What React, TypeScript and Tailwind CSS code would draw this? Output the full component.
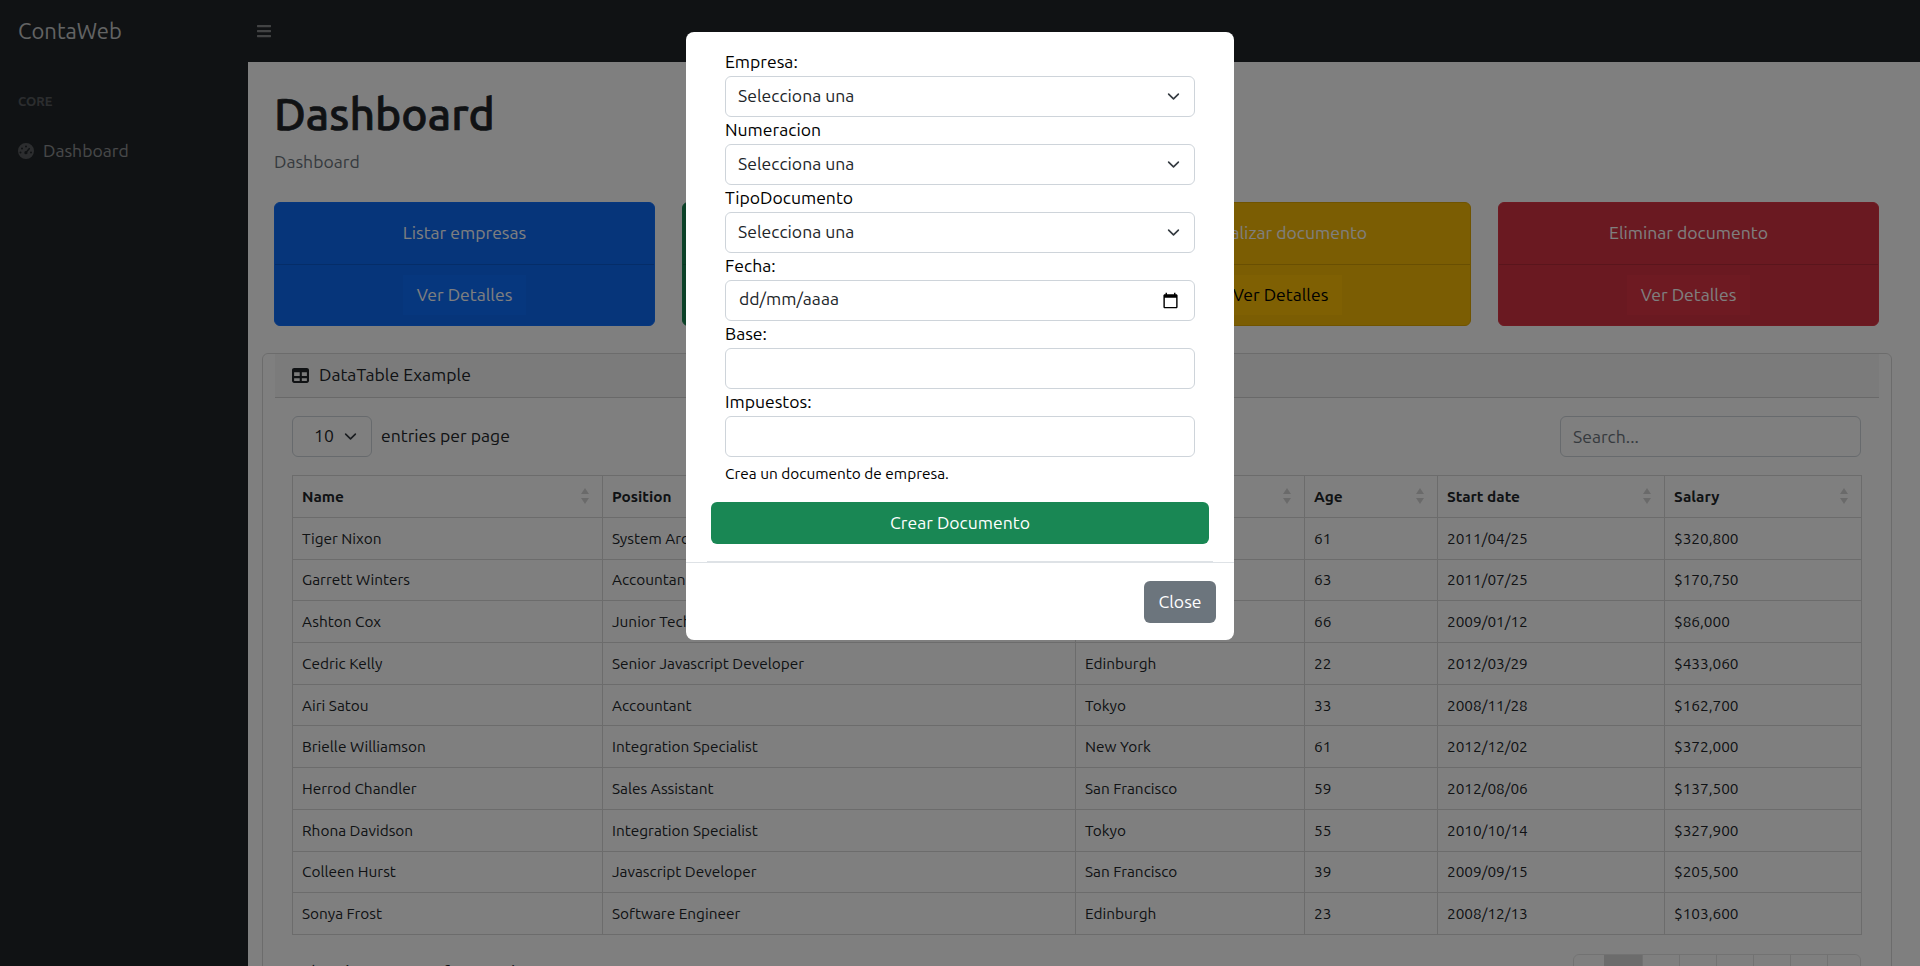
import React from 'react';

const employees = [
  ['Tiger Nixon', 'System Architect', 'Edinburgh', '61', '2011/04/25', '$320,800'],
  ['Garrett Winters', 'Accountant', 'Tokyo', '63', '2011/07/25', '$170,750'],
  ['Ashton Cox', 'Junior Technical Author', 'San Francisco', '66', '2009/01/12', '$86,000'],
  ['Cedric Kelly', 'Senior Javascript Developer', 'Edinburgh', '22', '2012/03/29', '$433,060'],
  ['Airi Satou', 'Accountant', 'Tokyo', '33', '2008/11/28', '$162,700'],
  ['Brielle Williamson', 'Integration Specialist', 'New York', '61', '2012/12/02', '$372,000'],
  ['Herrod Chandler', 'Sales Assistant', 'San Francisco', '59', '2012/08/06', '$137,500'],
  ['Rhona Davidson', 'Integration Specialist', 'Tokyo', '55', '2010/10/14', '$327,900'],
  ['Colleen Hurst', 'Javascript Developer', 'San Francisco', '39', '2009/09/15', '$205,500'],
  ['Sonya Frost', 'Software Engineer', 'Edinburgh', '23', '2008/12/13', '$103,600'],
];

const columns = [
  { label: 'Name', width: 'w-[310px]' },
  { label: 'Position', width: 'w-[473px]' },
  { label: 'Office', width: 'w-[229px]' },
  { label: 'Age', width: 'w-[133px]' },
  { label: 'Start date', width: 'w-[227px]' },
  { label: 'Salary', width: 'w-[197px]' },
];

const Chevron = ({ className }: { className?: string }) => (
  <svg viewBox="0 0 16 16" className={className} fill="none" stroke="#343a40" strokeWidth="2" strokeLinecap="round" strokeLinejoin="round">
    <path d="m2 5 6 6 6-6" />
  </svg>
);

const SortArrows = () => (
  <svg viewBox="0 0 8 16" className="w-2 h-4 shrink-0 mr-[3px]" fill="#000" fillOpacity="0.17">
    <path d="M4 0 8 6H0z" />
    <path d="M0 10h8l-4 6z" />
  </svg>
);

const StatCard = ({ title, color, border, btn, btnText }: { title: string; color: string; border: string; btn: string; btnText: string }) => (
  <div className={`flex flex-col h-[124px] rounded-[6px] border overflow-hidden ${color} ${border}`}>
    <div className="flex-1 flex items-center justify-center bg-black/[0.03] text-white">{title}</div>
    <div className="h-[61px] border-t border-black/15 bg-black/[0.03] flex items-center justify-center">
      <span className={`h-10 px-[14px] flex items-center justify-center ${btn} ${btnText}`}>Ver Detalles</span>
    </div>
  </div>
);

const SelectField = ({ label }: { label: string }) => (
  <div>
    <label className="block h-[27px] leading-[25px] text-black">{label}</label>
    <div className="relative">
      <select className="block w-full h-[41px] appearance-none rounded-[6px] border border-[#ced4da] bg-white pl-3 pr-9 pb-[1px] text-[#212529]">
        <option>Selecciona una</option>
      </select>
      <Chevron className="absolute right-[15px] top-[14px] w-[13px] h-[13px] pointer-events-none" />
    </div>
  </div>
);

const InputField = ({ label }: { label: string }) => (
  <div>
    <label className="block h-[27px] leading-[25px] text-black">{label}</label>
    <input type="text" className="block w-full h-[41px] rounded-[6px] border border-[#ced4da] bg-white px-3" />
  </div>
);

const App: React.FC = () => {
  return (
    <div className="font-['Ubuntu','Noto_Sans',sans-serif] h-[966px] overflow-hidden bg-white text-[#212529] text-[17.6px] relative">
      <header className="h-[62px] bg-[#212529] flex items-center">
        <div className="w-[248px] pl-[18px] pb-[2px] text-[22px] text-white/75">ContaWeb</div>
        <svg viewBox="0 0 448 512" className="w-[14px] h-4 ml-[9px]" fill="#ffffff" fillOpacity="0.45">
          <path d="M16 132h416c8.837 0 16-7.163 16-16V76c0-8.837-7.163-16-16-16H16C7.163 60 0 67.163 0 76v40c0 8.837 7.163 16 16 16zm0 160h416c8.837 0 16-7.163 16-16v-40c0-8.837-7.163-16-16-16H16c-8.837 0-16 7.163-16 16v40c0 8.837 7.163 16 16 16zm0 160h416c8.837 0 16-7.163 16-16v-40c0-8.837-7.163-16-16-16H16c-8.837 0-16 7.163-16 16v40c0 8.837 7.163 16 16 16z" />
        </svg>
      </header>

      <div className="flex">
        <aside className="w-[248px] h-[904px] shrink-0 bg-[#212529] pl-[18px]">
          <div className="mt-[30px] text-[13px] font-bold leading-[18px] text-white/25">CORE</div>
          <div className="mt-[29px] flex items-center gap-[9px] text-white/50">
            <svg viewBox="0 0 16 16" className="w-4 h-4 text-white/25" fill="currentColor">
              <path d="M8 0a8 8 0 1 0 0 16A8 8 0 0 0 8 0zM8 2.5a1 1 0 1 1 0 2 1 1 0 0 1 0-2zM4 4.600a1 1 0 1 1 0 2 1 1 0 0 1 0-2zM2.500 8.500a1 1 0 1 1 0 2 1 1 0 0 1 0-2zm9-3.600a.7.7 0 0 1 .5 1L9.400 9a1.600 1.600 0 1 1-1.100-.9l2.500-3a.7.7 0 0 1 .7-.2zM13 8.500a1 1 0 1 1 0 2 1 1 0 0 1 0-2z" />
            </svg>
            <span className="leading-6">Dashboard</span>
          </div>
        </aside>

        <main className="flex-1 min-w-0 pl-[14px] pr-[28px]">
          <div className="px-3">
            <h1 className="mt-7 text-[44.5px] leading-[48px] font-medium [-webkit-text-stroke:0.7px_#212529]">Dashboard</h1>
            <p className="mt-3 leading-6 text-[#6c757d]">Dashboard</p>
            <div className="mt-7 grid grid-cols-4 gap-[27px] pr-[1px]">
              <StatCard title="Listar empresas" color="bg-[#0d6efd]" border="border-[#0d6efd]" btn="bg-[#0d6efd]" btnText="text-white" />
              <StatCard title="Crear documento" color="bg-[#198754]" border="border-[#198754]" btn="bg-[#198754]" btnText="text-white" />
              <StatCard title="Actualizar documento" color="bg-[#ffc107]" border="border-[#e0a800]" btn="bg-[#ffc107]" btnText="text-black" />
              <StatCard title="Eliminar documento" color="bg-[#dc3545]" border="border-[#dc3545]" btn="bg-[#dc3545]" btnText="text-white" />
            </div>
          </div>

          <section className="mt-[27px] border border-black/15 rounded-[6px] px-3">
            <div className="h-[44px] bg-black/[0.03] border-b border-black/15 pl-[17px] pb-[1px] flex items-center gap-[10px]">
              <svg viewBox="0 0 512 512" className="w-[17px] h-[17px] text-[#212529]" fill="currentColor">
                <path d="M64 32C28.700 32 0 60.700 0 96v320c0 35.300 28.700 64 64 64h384c35.300 0 64-28.700 64-64V96c0-35.300-28.700-64-64-64H64zm0 128h168v112H64V160zm0 176h168v88H72c-4.400 0-8-3.600-8-8v-80zm232 88v-88h152v80c0 4.400-3.600 8-8 8H296zm152-152H296V160h152v112z" />
              </svg>
              <span>DataTable Example</span>
            </div>
            <div className="pl-[17px] pr-[18px] pt-[18px]">
              <div className="flex items-center justify-between">
                <div className="flex items-center gap-[9px]">
                  <div className="w-20 h-[41px] rounded-[6px] border border-[#ced4da] flex items-center pl-[21px] gap-[10px]">
                    <span>10</span>
                    <Chevron className="w-[13px] h-[13px]" />
                  </div>
                  <span>entries per page</span>
                </div>
                <input placeholder="Search..." className="w-[301px] h-[41px] rounded-[6px] border border-[#ced4da] px-3 placeholder:text-[#6c757d]" />
              </div>

              <table className="mt-[18px] w-[1569px] table-fixed border-collapse text-[15.4px] text-[#212529]">
                <thead>
                  <tr className="h-[42px]">
                    {columns.map(col => (
                      <th key={col.label} className={`${col.width} border border-[#d9d9d9] pl-[9px] pr-[10px] text-left font-bold`}>
                        <div className="flex items-center justify-between">
                          {col.label}
                          <SortArrows />
                        </div>
                      </th>
                    ))}
                  </tr>
                </thead>
                <tbody>
                  {employees.map(row => (
                    <tr key={row[0]} className="h-[41.7px]">
                      {row.map((cell, i) => (
                        <td key={i} className="border border-[#d9d9d9] pl-[9px] pr-[10px] truncate">
                          {cell}
                        </td>
                      ))}
                    </tr>
                  ))}
                </tbody>
              </table>

              <div className="mt-[19px] flex items-start justify-between">
                <div className="pl-[10px] pt-[5px]">Showing 1 to 10 of 57 entries</div>
                <div className="flex h-[44px] border border-black/10 rounded-[6px] overflow-hidden text-center">
                  <div className="w-[30px] pt-[14px]">‹</div>
                  <div className="w-[38px] pt-[14px] bg-black/15">1</div>
                  {['2', '3', '4', '5', '6'].map(p => (
                    <div key={p} className="w-[37px] pt-[14px] border-l border-black/10">{p}</div>
                  ))}
                  <div className="w-[33px] pt-[14px] border-l border-black/10">›</div>
                </div>
              </div>
            </div>
          </section>
        </main>
      </div>

      <div className="absolute inset-0 bg-black/50 flex justify-center items-start">
        <div className="mt-8 w-[548px] h-[608px] bg-white rounded-[8px] flex flex-col">
          <form className="px-[39px] pt-[17px]">
            <SelectField label="Empresa:" />
            <SelectField label="Numeracion" />
            <SelectField label="TipoDocumento" />
            <div>
              <label className="block h-[27px] leading-[25px] text-black">Fecha:</label>
              <div className="h-[41px] rounded-[6px] border border-[#ced4da] bg-white pl-[13px] pr-3 pb-[2px] flex items-center justify-between text-[#212529]">
                <span>dd/mm/aaaa</span>
                <svg viewBox="0 0 24 24" className="w-[17px] h-[17px] mr-[3px] mt-[2px]" fill="#000">
                  <path d="M20 3h-1V1h-2v2H7V1H5v2H4c-1.100 0-2 .9-2 2v16c0 1.100.9 2 2 2h16c1.100 0 2-.9 2-2V5c0-1.100-.9-2-2-2zm0 18H4V8h16v13z" />
                </svg>
              </div>
            </div>
            <InputField label="Base:" />
            <InputField label="Impuestos:" />
            <p className="mt-[6px] text-[15.4px] leading-[21px] text-black">Crea un documento de empresa.</p>
            <button type="button" className="block mt-[18px] -mx-[14px] w-[498px] h-[42px] rounded-[6px] bg-[#198754] text-white text-center">Crear Documento</button>
          </form>
          <hr className="mt-[17px] mx-[21px] border-t border-[#dee2e6]" />
          <div className="border-t border-[#dee2e6] flex justify-end pt-[18px] pr-[18px]">
            <button type="button" className="w-[72px] h-[42px] rounded-[6px] bg-[#6c757d] text-white">Close</button>
          </div>
        </div>
      </div>
    </div>
  );
};

export default App;
